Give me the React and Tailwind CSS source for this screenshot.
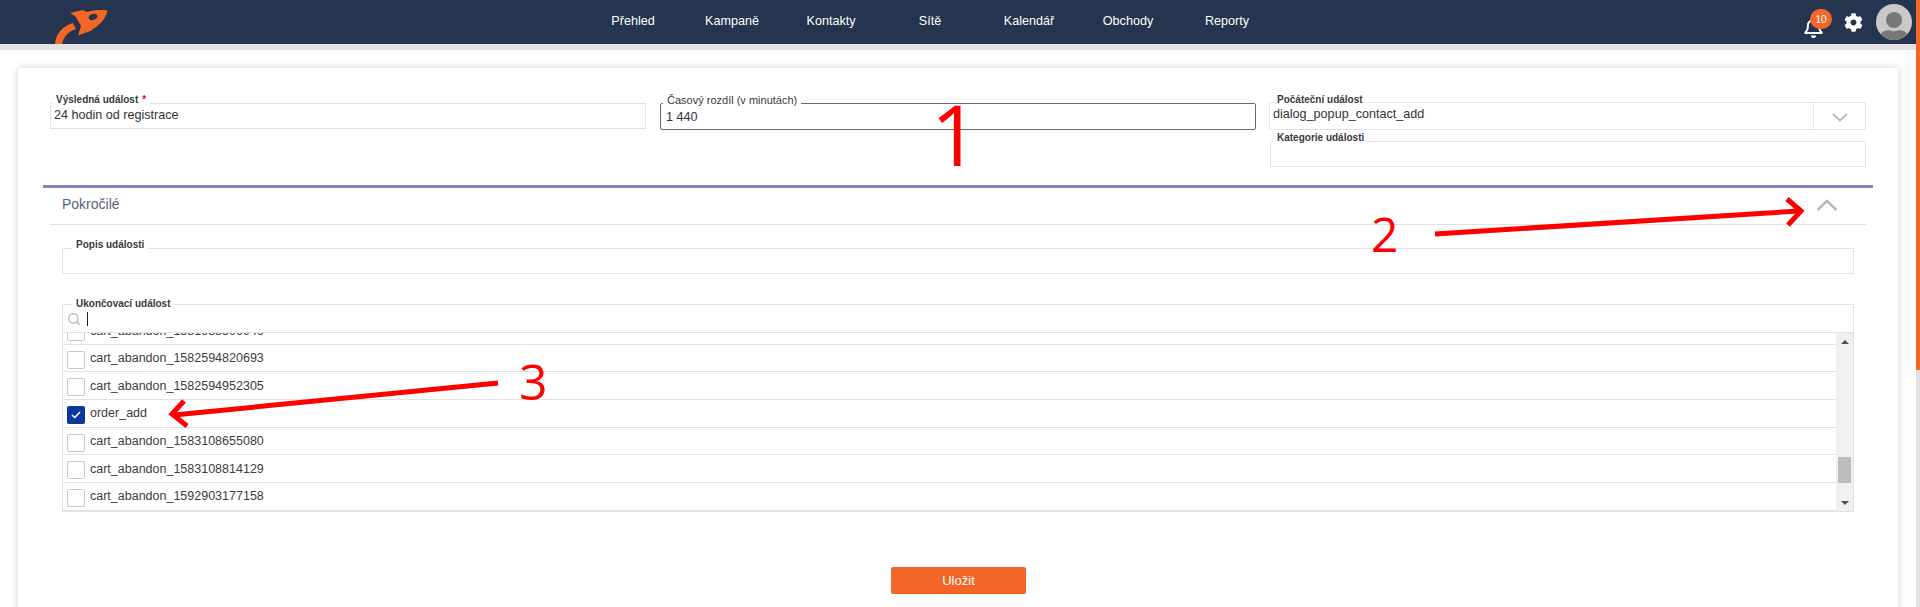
import { Search } from 'lucide-react';
import { FaCog, FaRegBell } from 'react-icons/fa';

const NAV = ['Přehled', 'Kampaně', 'Kontakty', 'Sítě', 'Kalendář', 'Obchody', 'Reporty'];

const ROWS = [
  { name: 'cart_abandon_1581938506946' },
  { name: 'cart_abandon_1582594820693' },
  { name: 'cart_abandon_1582594952305' },
  { name: 'order_add', checked: true },
  { name: 'cart_abandon_1583108655080' },
  { name: 'cart_abandon_1583108814129' },
  { name: 'cart_abandon_1592903177158' },
];

const Logo = () => (
  <svg width="120" height="44" viewBox="0 0 120 44" className="shrink-0">
    <path d="M55 44C56 33 63 26 73 23L76 29C69 31 64 36 62 44Z" fill="#f26628" />
    <path
      d="M70 13L83 10L87 12C93 10 101 9.500 107.500 10.500C106.500 16 103 22 96 27L90.500 31L78 35.500L81 26L77 19L75 16Z"
      fill="#f26628"
    />
    <ellipse cx="93" cy="17" rx="4.500" ry="2.800" transform="rotate(-20 93 17)" fill="#25344f" />
  </svg>
);

const Header = () => (
  <div className="flex h-[44px] items-center bg-[#25344f] text-white">
    <Logo />
    <div className="ml-[463.5px] flex">
      {NAV.map((item) => (
        <a key={item} className="w-[99px] text-center text-[12.6px] leading-[40px] pb-[3px]">
          {item}
        </a>
      ))}
    </div>
    <div className="relative ml-auto flex items-center">
      <div className="relative h-[36px] w-[36px] mr-[15px]">
        <FaRegBell className="absolute left-[10px] top-[13px] h-[21px] w-[21px]" />
        <span className="absolute left-[17px] top-[5px] flex h-[20px] w-[22px] items-center justify-center rounded-full bg-[#f26628] text-[10px]">
          10
        </span>
      </div>
      <FaCog className="h-[19px] w-[19px] mr-[13px] mt-[1px]" />
      <svg width="36" height="36" viewBox="0 0 36 36" className="mr-[4px]">
        <circle cx="18" cy="18" r="18" fill="#c9c9c9" />
        <circle cx="18" cy="16" r="8" fill="#787878" />
        <path d="M4.500 30C8 26 12 25.500 18 27.500C24 25.500 28 26 31.500 30A18 18 0 0 1 4.500 30Z" fill="#787878" />
      </svg>
    </div>
  </div>
);

const Field = ({ label, required, labelClass, boxClass, children }) => (
  <div className={`relative border border-[#e2e2e2] ${boxClass}`}>
    <span className={`absolute bg-white px-[4px] text-[10px] font-bold leading-[12px] text-[#3a3a3a] ${labelClass}`}>
      {label}
      {required && <span className="ml-[4px] text-[#e6004c]">*</span>}
    </span>
    {children}
  </div>
);

const ChevronDown = () => (
  <svg width="16" height="9" viewBox="0 0 16 9">
    <polyline points="1,1 8,7.500 15,1" fill="none" stroke="#bbbbbb" strokeWidth="2" />
  </svg>
);

const TopFields = () => (
  <div className="ml-[32px] flex items-start text-[12.6px] text-[#333333]">
    <Field label="Výsledná událost" required boxClass="h-[26px] w-[596px]" labelClass="left-[1px] -top-[10px]">
      <div className="pl-[3px] leading-[22px]">24 hodin od registrace</div>
    </Field>
    <Field
      label="Časový rozdíl (v minutách)"
      boxClass="ml-[14px] h-[27px] w-[596px] rounded-[2px] !border-[#6b6b6b]"
      labelClass="left-[2px] -top-[10px] !font-normal !text-[11px]"
    >
      <div className="pl-[5px] leading-[26px]">1 440</div>
    </Field>
    <div className="ml-[13px] -mt-[1px] w-[597px]">
      <Field label="Počáteční událost" boxClass="flex h-[28px]" labelClass="left-[3px] -top-[9px]">
        <div className="flex-1 pl-[3px] leading-[23px]">dialog_popup_contact_add</div>
        <div className="flex w-[52px] items-center justify-center border-l border-[#e2e2e2] pt-[3px]">
          <ChevronDown />
        </div>
      </Field>
      <Field label="Kategorie události" boxClass="ml-[1px] mt-[11px] h-[26px]" labelClass="left-[2px] -top-[10px]" />
    </div>
  </div>
);

const Row = ({ row, first }) => (
  <div
    className={`flex h-[27.67px] shrink-0 items-start gap-[5px] border-b border-[#e2e2e2] pl-[4px] pt-[6px] text-[12.5px] leading-[14px] text-[#3d3d3d] ${
      first ? '-mt-[16px]' : ''
    }`}
  >
    {row.checked ? (
      <span className="flex h-[18px] w-[18px] items-center justify-center rounded-[2px] bg-[#0b3a9c]">
        <svg width="10" height="8" viewBox="0 0 10 8">
          <polyline points="1,4 3.800,6.500 9,1" fill="none" stroke="white" strokeWidth="1.600" />
        </svg>
      </span>
    ) : (
      <span className="h-[18px] w-[18px] rounded-[2px] border border-[#c6c6d2] bg-white" />
    )}
    <span className="pt-[0.5px]">{row.name}</span>
  </div>
);

const Scrollbar = () => (
  <div className="flex w-[17px] shrink-0 flex-col items-center bg-[#f0f0f0] pt-[7px]">
    <svg width="8" height="4" viewBox="0 0 8 4">
      <polygon points="4,0 8,4 0,4" fill="#505050" />
    </svg>
    <div className="mt-[113px] h-[26px] w-[13px] bg-[#bdbdbd]" />
    <svg width="8" height="4" viewBox="0 0 8 4" className="mt-[18px]">
      <polygon points="0,0 8,0 4,4" fill="#505050" />
    </svg>
  </div>
);

const Advanced = () => (
  <div>
    <div className="ml-[32px] flex h-[37px] w-[1816px] items-center justify-between border-b border-[#e2e2e2] pb-[3px] pl-[12px] pr-[28px]">
      <span className="text-[14px] text-[#5a5f7a]">Pokročilé</span>
      <svg width="22" height="12" viewBox="0 0 22 12">
        <polyline points="1.500,11 11,2 20.500,11" fill="none" stroke="#b9b9b9" strokeWidth="2.500" />
      </svg>
    </div>
    <Field label="Popis události" boxClass="ml-[44px] mt-[23px] h-[26px] w-[1792px]" labelClass="left-[9px] -top-[10px]" />
    <Field
      label="Ukončovací událost"
      boxClass="ml-[44px] mt-[30px] h-[208px] w-[1792px]"
      labelClass="left-[9px] -top-[7px]"
    >
      <div className="flex h-[28px] items-center border-b border-[#e2e2e2] pl-[4px] pt-[1px]">
        <Search className="h-[14px] w-[14px] text-[#b5b5b5]" strokeWidth={2.2} />
        <span className="ml-[6px] h-[14px] w-px bg-[#222222]" />
      </div>
      <div className="flex h-[178px]">
        <div className="flex min-w-0 flex-1 flex-col overflow-hidden">
          {ROWS.map((row, i) => (
            <Row key={row.name} row={row} first={i === 0} />
          ))}
        </div>
        <Scrollbar />
      </div>
    </Field>
  </div>
);

// red hand-drawn notes on top of the screenshot
const Annotations = () => (
  <>
    <svg width="1920" height="607" className="pointer-events-none absolute left-0 top-0">
      <g fill="none" stroke="#fe0000" strokeWidth="5">
        <line x1="1435" y1="234" x2="1799" y2="211" />
        <polyline points="1787,199 1801,211 1788,225" />
        <line x1="498" y1="383" x2="174" y2="415" />
        <polyline points="184,401 172,414 187,426" />
      </g>
    </svg>
    <span className="absolute left-[931px] top-[77px] font-['Open_Sans'] text-[84px] leading-[114px] text-[#fe0000]">1</span>
    <span className="absolute left-[1371px] top-[201px] font-['Open_Sans'] text-[48px] leading-[65px] text-[#fe0000]">2</span>
    <span className="absolute left-[519px] top-[347px] font-['Open_Sans'] text-[50px] leading-[68px] text-[#fe0000]">3</span>
  </>
);

export default function App() {
  return (
    <div className="relative flex h-[607px] w-full overflow-hidden bg-white font-['Liberation_Sans',Arial,sans-serif]">
      <div className="w-[1916px] shrink-0">
        <Header />
        <div className="h-[6px] bg-[#e2e2e2]" />
        <div className="ml-[18px] mt-[18px] h-[560px] w-[1880px] bg-white pt-[35px] shadow-[0_0_8px_rgba(0,0,0,0.18)]">
          <TopFields />
          <div className="ml-[25px] mt-[18px] h-[3px] w-[1830px] bg-[#8a80bd]" />
          <Advanced />
          <button className="ml-[873px] mt-[55px] h-[27px] w-[135px] rounded-[2px] bg-[#f26628] text-[13px] text-white">
            Uložit
          </button>
        </div>
      </div>
      <div className="w-[4px] shrink-0 bg-[#e0e0e4]">
        <div className="h-[370px] bg-[#f26628]" />
      </div>
      <Annotations />
    </div>
  );
}
